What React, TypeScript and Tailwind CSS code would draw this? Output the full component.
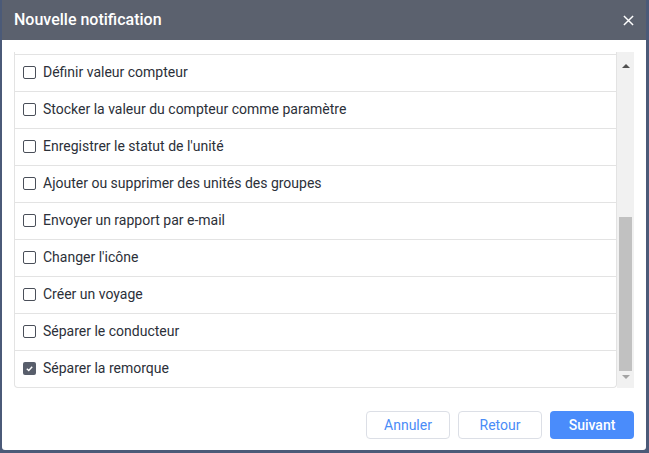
import React from 'react';

const items = [
  { label: 'Définir valeur compteur', checked: false },
  { label: 'Stocker la valeur du compteur comme paramètre', checked: false },
  { label: "Enregistrer le statut de l'unité", checked: false },
  { label: 'Ajouter ou supprimer des unités des groupes', checked: false },
  { label: 'Envoyer un rapport par e-mail', checked: false },
  { label: "Changer l'icône", checked: false },
  { label: 'Créer un voyage', checked: false },
  { label: 'Séparer le conducteur', checked: false },
  { label: 'Séparer la remorque', checked: true },
];

const Checkbox = ({ checked }: { checked: boolean }) =>
  checked ? (
    <span className="flex h-[13px] w-[13px] items-center justify-center rounded-[2px] bg-[#585e6b]">
      <svg viewBox="0 0 10 10" className="h-[9px] w-[9px]">
        <path d="M2 5.2 L4.2 7.2 L8 3" fill="none" stroke="#fff" strokeWidth="1.6" />
      </svg>
    </span>
  ) : (
    <span className="h-[13px] w-[13px] rounded-[2px] border border-[#4a4f59] bg-white" />
  );

export default function App() {
  return (
    <div
      className="flex h-[453px] w-[649px] bg-[#4b5a78] pb-[3px] pl-[2px] pr-[3px]"
      style={{ fontFamily: 'Roboto, "Liberation Sans", sans-serif' }}
    >
      <div className="flex flex-1 flex-col overflow-hidden rounded-b-[3px] bg-white">
        <div className="flex h-[40px] shrink-0 items-center justify-between bg-[#5b616e] pl-3 pr-[12px]">
          <h1 className="text-[16px] font-medium text-white">Nouvelle notification</h1>
          <svg viewBox="0 0 12 12" className="h-[11px] w-[11px]">
            <path d="M1 1 L11 11 M11 1 L1 11" stroke="#fff" strokeWidth="1.6" />
          </svg>
        </div>

        <div className="mx-3 mt-3 flex h-[336px]">
          <div className="flex flex-1 flex-col rounded-b-[4px] border-x border-b border-[#e3e3e3]">
            <div className="h-[3px] shrink-0 border-b border-[#e3e3e3]" />
            {items.map((it, i) => (
              <div
                key={it.label}
                className={`flex h-[37px] shrink-0 items-center gap-[7px] pb-[2px] pl-[8px] text-[14px] text-[#2c3039] ${
                  i < items.length - 1 ? 'border-b border-[#e3e3e3]' : ''
                }`}
              >
                <Checkbox checked={it.checked} />
                <span>{it.label}</span>
              </div>
            ))}
          </div>
          <div className="flex w-[17px] flex-col items-center bg-[#f1f1f1]">
            <div className="flex h-[16px] items-end justify-center">
              <span className="h-0 w-0 border-x-[4px] border-b-[4px] border-x-transparent border-b-[#505050]" />
            </div>
            <div className="mt-[149px] h-[154px] w-[13px] bg-[#c1c1c1]" />
            <div className="flex h-[12px] items-center justify-center">
              <span className="h-0 w-0 border-x-[4px] border-t-[4px] border-x-transparent border-t-[#a3a3a3]" />
            </div>
          </div>
        </div>

        <div className="mt-[23px] flex justify-end gap-[8px] pr-3">
          <button className="h-[28px] w-[84px] rounded-[4px] border border-[#dcdfe6] text-[14px] text-[#4a8cf7]">
            Annuler
          </button>
          <button className="h-[28px] w-[84px] rounded-[4px] border border-[#dcdfe6] text-[14px] text-[#4a8cf7]">
            Retour
          </button>
          <button className="h-[28px] w-[84px] rounded-[4px] bg-[#4a8cfb] text-[14px] font-medium text-white">
            Suivant
          </button>
        </div>
      </div>
    </div>
  );
}
